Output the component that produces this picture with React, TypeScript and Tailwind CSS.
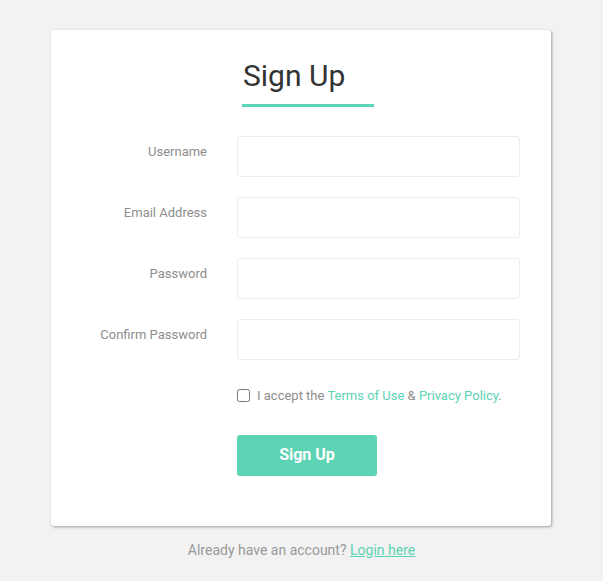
import React from 'react';

const fields = ['Username', 'Email Address', 'Password', 'Confirm Password'];

export default function App() {
  return (
    <div className="min-h-[581px] bg-[#f2f2f2] pt-[30px] font-['Roboto',sans-serif]">
      <div className="ml-[51px] w-[500px] rounded-[3px] bg-white pb-[50px] pt-[26px] shadow-[1px_1px_3px_rgba(0,0,0,0.35)]">
        <div className="ml-[191px] w-[132px] border-b-[3px] border-[#5cd3b4] pb-[8px]">
          <h1 className="pl-[1px] text-[30px] leading-[40px] text-[#333]">Sign Up</h1>
        </div>
        <form className="mt-[29px] flex flex-col gap-[20px] pr-[31px]">
          {fields.map(f => (
            <div key={f} className="flex">
              <label className="w-[156px] pt-[6px] text-right text-[13px] text-[#8e8e8e]">{f}</label>
              <input
                type={f.includes('Password') ? 'password' : 'text'}
                className="ml-[30px] h-[41px] w-[283px] rounded-[3px] border border-[#ececec] outline-none"
              />
            </div>
          ))}
          <div className="ml-[186px] mt-[6px] flex items-center text-[13px] text-[#8e8e8e]">
            <input type="checkbox" className="m-0 h-[13px] w-[13px]" />
            <span className="ml-[7px]">
              I accept the <a className="text-[#5cd3b4]">Terms of Use</a> &amp; <a className="text-[#5cd3b4]">Privacy Policy</a>.
            </span>
          </div>
          <div className="ml-[186px] mt-[9px]">
            <button type="button" className="h-[41px] w-[140px] rounded-[3px] bg-[#5cd3b4] text-[16px] font-bold text-white">
              Sign Up
            </button>
          </div>
        </form>
      </div>
      <p className="mt-[14px] text-center text-[14px] text-[#999]">
        Already have an account? <a className="text-[#5cd3b4] underline">Login here</a>
      </p>
    </div>
  );
}
